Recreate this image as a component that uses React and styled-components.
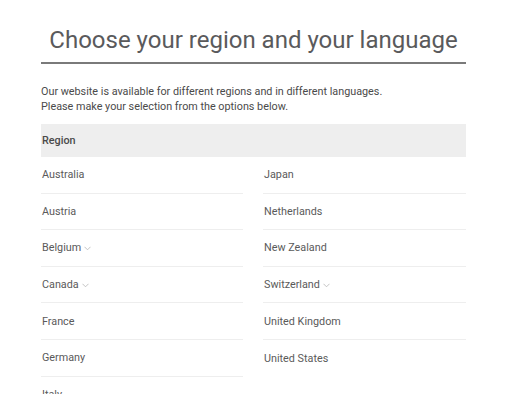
import React from 'react';
import styled, { createGlobalStyle } from 'styled-components';

const Global = createGlobalStyle`
  html, body {
    margin: 0;
    padding: 0;
    background: #fff;
    font-family: Roboto, "Liberation Sans", sans-serif;
  }
`;

const Page = styled.div`
  width: 425px;
  margin-left: 41px;
  padding-top: 23px;
`;

const Title = styled.h1`
  margin: 0;
  font-size: 24px;
  font-weight: 400;
  line-height: 34px;
  white-space: nowrap;
  color: #5a5a5c;
  text-align: center;
  padding-bottom: 5px;
  border-bottom: 2px solid #7a7a7a;
`;

const Intro = styled.p`
  margin: 20px 0 0;
  font-size: 10.8px;
  line-height: 15px;
  color: #4a4a4a;
`;

const Header = styled.div`
  margin-top: 10px;
  height: 33px;
  display: flex;
  align-items: center;
  padding-left: 1px;
  background: #eeeeee;
  font-size: 10.8px;
  font-weight: 500;
  color: #4a4a4a;
`;

const Columns = styled.div`
  display: grid;
  grid-template-columns: 202px 203px;
  column-gap: 20px;
`;

const Column = styled.ul`
  list-style: none;
  margin: 0;
  padding: 0;
`;

const Row = styled.li`
  box-sizing: border-box;
  height: 36.6px;
  display: flex;
  align-items: center;
  padding: 1px 0 1px 1px;
  font-size: 10.8px;
  color: #5a5a5a;
  border-bottom: ${p => (p.$last ? 'none' : '1.5px solid #eeeeee')};
`;

const Chevron = () => (
  <svg width="7" height="5" viewBox="0 0 7 5" style={{ marginLeft: 3, marginTop: 1 }}>
    <path d="M0.5 0.8 L3.5 3.8 L6.5 0.8" fill="none" stroke="#b5b5b5" strokeWidth="0.8" />
  </svg>
);

const left = [
  ['Australia'], ['Austria'], ['Belgium', true], ['Canada', true],
  ['France'], ['Germany'], ['Italy'],
];
const right = [
  ['Japan'], ['Netherlands'], ['New Zealand'], ['Switzerland', true],
  ['United Kingdom'], ['United States'],
];

const List = ({ items }) => (
  <Column>
    {items.map(([name, sub], i) => (
      <Row key={name} $last={i === items.length - 1}>
        {name}
        {sub && <Chevron />}
      </Row>
    ))}
  </Column>
);

export default function App() {
  return (
    <>
      <Global />
      <Page>
        <Title>Choose your region and your language</Title>
        <Intro>
          Our website is available for different regions and in different languages.
          <br />
          Please make your selection from the options below.
        </Intro>
        <Header>Region</Header>
        <Columns>
          <List items={left} />
          <List items={right} />
        </Columns>
      </Page>
    </>
  );
}
